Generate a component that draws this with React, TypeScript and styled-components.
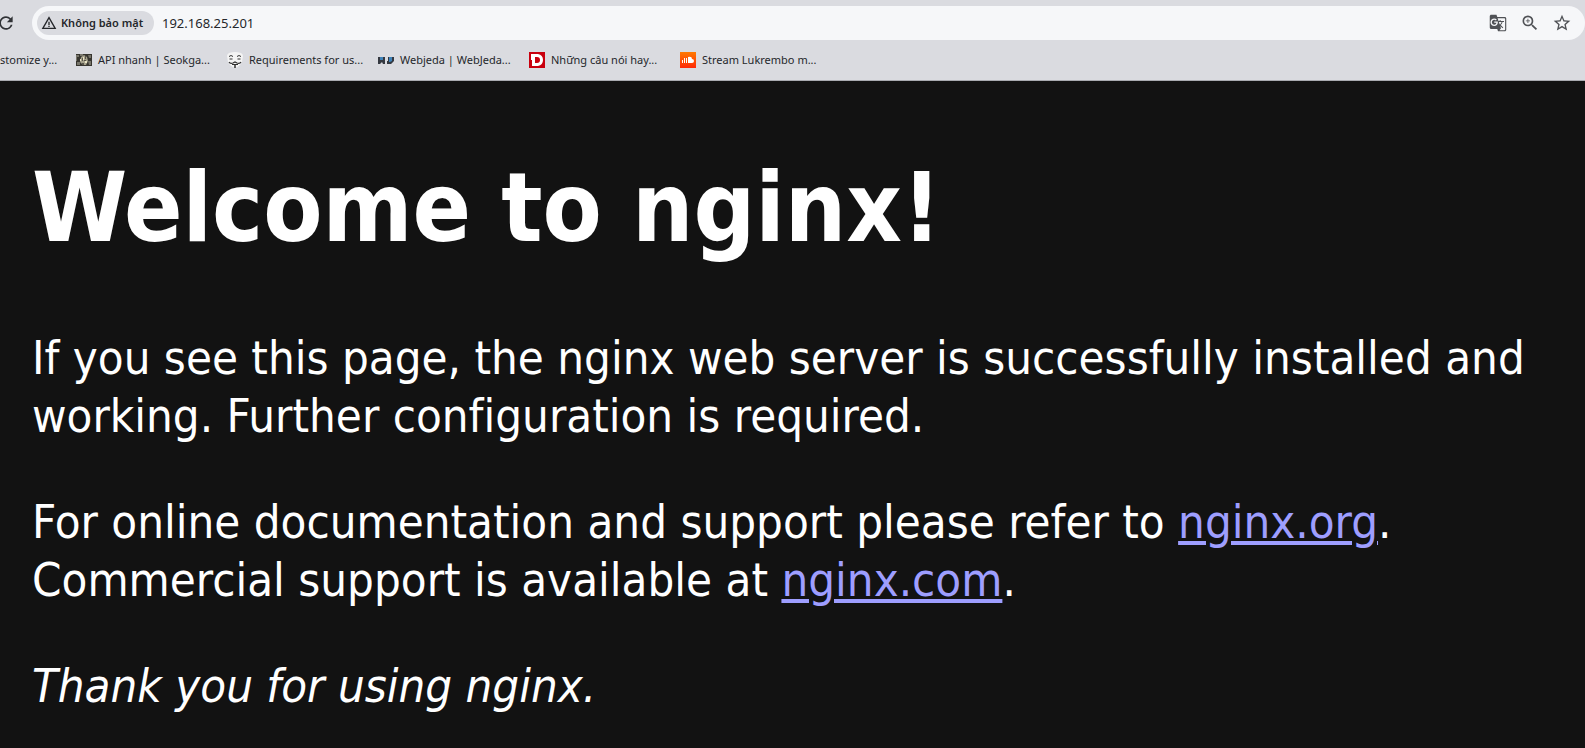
import React from "react";
import styled, { createGlobalStyle } from "styled-components";
import { MdGTranslate, MdRefresh, MdStarBorder, MdWarningAmber, MdZoomIn } from "react-icons/md";

const GlobalStyle = createGlobalStyle`
  * { box-sizing: border-box; }
  body { margin: 0; background: #121212; }
`;

const Window = styled.div`
  min-height: 100vh;
  overflow: hidden;
  background: #121212;
`;

const BrowserChrome = styled.header`
  background: #dadbe0;
  border-bottom: 1px solid #a9abb0;
  color: #25272b;
  font: 11px/16px "Noto Sans", "Open Sans", sans-serif;
`;

const Toolbar = styled.div`
  display: flex;
  align-items: center;
  height: 40px;
  padding-top: 6px;
`;

const IconButton = styled.button`
  display: flex;
  align-items: center;
  justify-content: center;
  width: 32px;
  height: 32px;
  padding: 0;
  border: 0;
  background: none;
  color: #505256;
`;

const ReloadButton = styled(IconButton)`
  margin-left: -10px;
  margin-right: 10px;
  color: #303236;

  path:last-child {
    stroke: currentColor;
  }
`;

const AddressBar = styled.form`
  display: flex;
  flex: 1;
  align-items: center;
  height: 34px;
  padding: 0 7px 0 5px;
  border-radius: 17px;
  background: #f6f7f9;
`;

const SecurityChip = styled.button`
  display: flex;
  align-items: center;
  gap: 4px;
  height: 24px;
  width: 117px;
  padding: 0 0 0 4px;
  border: 0;
  border-radius: 12px;
  background: #dadbe0;
  color: #25272b;
  font: 600 11px/16px "Noto Sans", "Open Sans", sans-serif;
  white-space: nowrap;

  path:last-child {
    stroke: currentColor;
  }
`;

const UrlInput = styled.input`
  flex: 1;
  min-width: 0;
  margin-left: 8px;
  padding: 0;
  border: 0;
  outline: 0;
  background: none;
  color: #25272b;
  font: 13px/20px "Noto Sans", "Open Sans", sans-serif;
`;

const Bookmarks = styled.nav`
  display: flex;
  align-items: center;
  height: 40px;
`;

const Bookmark = styled.a<{ $first?: boolean }>`
  display: flex;
  flex: none;
  align-items: center;
  gap: 6px;
  width: ${(p) => (p.$first ? 76 : 151)}px;
  color: inherit;
  text-decoration: none;
  white-space: nowrap;
`;

const Page = styled.main`
  padding: 69px 32px 0;
  color: #fff;
  font: 47px/58px "DejaVu Sans Condensed", "DejaVu Sans", Tahoma, sans-serif;
  font-variant-ligatures: none;
`;

const Title = styled.h1`
  margin: 0 0 63px;
  font-size: 96px;
  line-height: 116px;
`;

const Paragraph = styled.p`
  margin: 0 0 48px;
`;

const Link = styled.a`
  color: #9e9eff;
  text-decoration-thickness: 4px;
  text-underline-offset: 3px;
`;

const GalleryIcon = () => (
  <svg width="16" height="16" viewBox="0 0 16 16" aria-hidden="true">
    <path fill="#37352f" d="M0 2h16v12H0z" />
    <path fill="#77756a" d="M0 3h3v2H1v4H0zM4 2h3v2H4zM12 3h3v3h-2zM1 10h3v3H1zM12 9h3v4h-2z" />
    <path fill="#a5a18c" d="M5 5l3-2 3 2 1 4-2 4H7L4 10z" />
    <path fill="#58544a" d="M6 6h1v3H6zM9 4h1v3H9zM8 8h2v1H8zM6 11h2v2H6z" />
    <path fill="#e9e3c4" d="M7 5h1v3H7zM9 9h2v2H9zM4 7h1v2H4z" />
  </svg>
);

const MaskIcon = () => (
  <svg width="16" height="16" viewBox="0 0 16 16" aria-hidden="true">
    <path fill="#f4f4f4" d="M2 1q6-2 12 0 2 1 2 3l-1 6q-2 4-7 6-5-2-7-6L0 4q0-2 2-3z" />
    <g fill="none" stroke="#303030">
      <path d="M2 4.500q2-2 4 0M10 4.500q2-2 4 0" />
      <path strokeWidth="1.200" d="M2.500 7h3M10.500 7h3M2 10q1 2 4 1l2-1 2 1q3 1 4-1" />
      <path d="M5 12.500h6" />
      <path strokeWidth="1.500" d="M8 12.500V16" />
    </g>
  </svg>
);

const WebjedaIcon = () => (
  <svg width="16" height="16" viewBox="0 0 16 16" aria-hidden="true">
    <path fill="#353941" d="M0 5h7v7H5l-1-2-2 2H0zM10 5h6v4l-3 3H9V9h1z" />
    <path fill="#3f82b8" d="M2 5h3v3H2zM11 5h3v4l-2 1h-1z" />
  </svg>
);

const QuoteIcon = () => (
  <svg width="16" height="16" viewBox="0 0 16 16" aria-hidden="true">
    <path fill="#c9000e" d="M0 0h16v16H0z" />
    <path fill="#fff" fillRule="evenodd" d="M2 2h7q5 1 5 6t-5 6H3V8H2zm4 3v6h2q3 0 3-3T8 5z" />
  </svg>
);

const SoundIcon = () => (
  <svg width="16" height="16" viewBox="0 0 16 16" aria-hidden="true">
    <defs>
      <linearGradient id="sound" x2="0" y2="1">
        <stop stopColor="#ff7a00" />
        <stop offset="1" stopColor="#ff2a08" />
      </linearGradient>
    </defs>
    <path fill="url(#sound)" d="M0 0h16v16H0z" />
    <path fill="#fff" d="M2 8h1v3H2zM4 6h1v5H4zM6 6h1v5H6zM8 5q4-1 4 2 2 0 2 2t-2 2H8z" />
  </svg>
);

const bookmarks = [
  { label: "API nhanh | Seokga...", Icon: GalleryIcon },
  { label: "Requirements for us...", Icon: MaskIcon },
  { label: "Webjeda | WebJeda...", Icon: WebjedaIcon },
  { label: "Những câu nói hay...", Icon: QuoteIcon },
  { label: "Stream Lukrembo m...", Icon: SoundIcon },
];

export default function App() {
  return (
    <Window>
      <GlobalStyle />
      <BrowserChrome>
        <Toolbar>
          <ReloadButton type="button" aria-label="Reload">
            <MdRefresh size={20} />
          </ReloadButton>
          <AddressBar onSubmit={(e) => e.preventDefault()}>
            <SecurityChip type="button">
              <MdWarningAmber size={16} />
              Không bảo mật
            </SecurityChip>
            <UrlInput aria-label="Address" defaultValue="192.168.25.201" spellCheck={false} />
            <IconButton type="button" aria-label="Translate">
              <MdGTranslate size={18} />
            </IconButton>
            <IconButton type="button" aria-label="Zoom">
              <MdZoomIn size={20} />
            </IconButton>
            <IconButton type="button" aria-label="Bookmark">
              <MdStarBorder size={20} />
            </IconButton>
          </AddressBar>
        </Toolbar>
        <Bookmarks aria-label="Bookmarks">
          <Bookmark href="#" $first>
            stomize y...
          </Bookmark>
          {bookmarks.map(({ label, Icon }) => (
            <Bookmark href="#" key={label}>
              <Icon />
              {label}
            </Bookmark>
          ))}
        </Bookmarks>
      </BrowserChrome>
      <Page>
        <Title>Welcome to nginx!</Title>
        <Paragraph>
          If you see this page, the nginx web server is successfully installed and working. Further
          configuration is required.
        </Paragraph>
        <Paragraph>
          For online documentation and support please refer to <Link href="http://nginx.org/">nginx.org</Link>.
          <br />
          Commercial support is available at <Link href="http://nginx.com/">nginx.com</Link>.
        </Paragraph>
        <Paragraph>
          <em>Thank you for using nginx.</em>
        </Paragraph>
      </Page>
    </Window>
  );
}
